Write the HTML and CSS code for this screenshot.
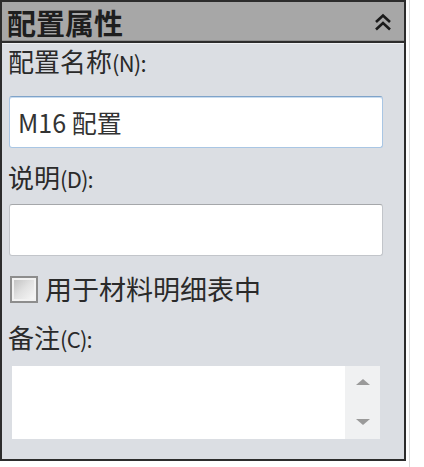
FILE: index.html
```html
<!DOCTYPE html>
<html lang="zh-CN">
<head>
<meta charset="utf-8">
<link rel="stylesheet" href="styles.css">
</head>
<body>
<div class="frame">
  <div class="panel">
    <div class="header">
      <span class="title">配置属性</span>
      <svg class="collapse" width="18" height="19" viewBox="0 0 18 19">
        <path d="M2 9 L9 2.5 L16 9" fill="none" stroke="#1a1a1a" stroke-width="2.6"/>
        <path d="M2 16.5 L9 10 L16 16.5" fill="none" stroke="#1a1a1a" stroke-width="2.6"/>
      </svg>
    </div>
    <div class="body">
      <div class="label first">配置名称<span class="lat">(N):</span></div>
      <div class="input active">M16 配置</div>
      <div class="label">说明<span class="lat">(D):</span></div>
      <div class="input"></div>
      <div class="check-row">
        <span class="checkbox"></span>
        <span class="check-label">用于材料明细表中</span>
      </div>
      <div class="label">备注<span class="lat">(C):</span></div>
      <div class="textarea">
        <div class="text-area-field"></div>
        <div class="scrollbar">
          <span class="arrow up"></span>
          <span class="arrow down"></span>
        </div>
      </div>
    </div>
  </div>
</div>
</body>
</html>
```
FILE: styles.css
```css
html, body {
  margin: 0;
  padding: 0;
  background: #ffffff;
}
body {
  font-family: "Noto Sans CJK SC", "Noto Sans", sans-serif;
  color: #2a2a2a;
}
.frame {
  width: 410px;
  height: 467px;
  border-right: 1px solid #dcdcdc;
  box-sizing: border-box;
}
.panel {
  width: 406px;
  height: 461px;
  box-sizing: border-box;
  border: 2px solid #2c2c2c;
  background: #dbdee3;
  display: flex;
  flex-direction: column;
}
.header {
  height: 39px;
  background: #a7a7a7;
  border-bottom: 2px solid #2c2c2c;
  display: flex;
  align-items: center;
  justify-content: space-between;
  padding: 0 12px 0 5px;
  box-shadow: inset 0 -1px 0 #8e8e8e;
}
.title {
  font-size: 29px;
  font-weight: 700;
  line-height: 1;
  color: #1e1e1e;
  letter-spacing: 0;
  margin-top: 1px;
}
.collapse {
  display: block;
  margin-top: 2px;
}
.body {
  flex: 1;
  display: flex;
  flex-direction: column;
  padding: 3px 0 0 6px;
  box-shadow: inset 0 1px 0 #eef0f3;
}
.label {
  font-size: 26px;
  line-height: 30px;
  height: 30px;
  margin-top: 14px;
  color: #2a2a2a;
}
.label.first {
  margin-top: 0;
}
.lat {
  font-size: 22px;
  letter-spacing: -0.8px;
}
.input {
  margin: 12px 0 0 1px;
  width: 374px;
  height: 52px;
  box-sizing: border-box;
  background: #ffffff;
  border: 1px solid #c2c5ca;
  border-top-color: #a5a7aa;
  border-radius: 3px;
  font-size: 25px;
  line-height: 50px;
  padding-left: 8px;
  color: #333;
}
.input.active {
  margin-top: 20px;
  border-color: #a9c6e4;
  border-top-color: #7fa3c9;
  box-shadow: inset 0 1px 0 #c9dcef;
}
.check-row {
  display: flex;
  align-items: center;
  gap: 7px;
  margin-top: 18px;
  height: 30px;
}
.checkbox {
  width: 28px;
  height: 27px;
  box-sizing: border-box;
  border: 2px solid #8d8d8d;
  background: linear-gradient(135deg, #bdbdbd 0%, #e2e2e2 50%, #fafafa 100%);
  box-shadow: inset 0 0 0 2px #f2f2f2;
  margin-left: 2px;
}
.check-label {
  font-size: 27px;
  line-height: 30px;
  color: #2a2a2a;
}
.check-row + .label {
  margin-top: 18px;
}
.textarea {
  margin: 14px 0 0 4px;
  width: 368px;
  height: 73px;
  display: flex;
}
.text-area-field {
  flex: 1;
  background: #ffffff;
}
.scrollbar {
  width: 35px;
  background: #f0f1f2;
  display: flex;
  flex-direction: column;
  justify-content: space-between;
  align-items: center;
  padding: 13px 0 14px;
  box-sizing: border-box;
}
.arrow {
  width: 0;
  height: 0;
  border-left: 7px solid transparent;
  border-right: 7px solid transparent;
}
.arrow.up {
  border-bottom: 6px solid #9a9a9a;
}
.arrow.down {
  border-top: 6px solid #9a9a9a;
}
```
